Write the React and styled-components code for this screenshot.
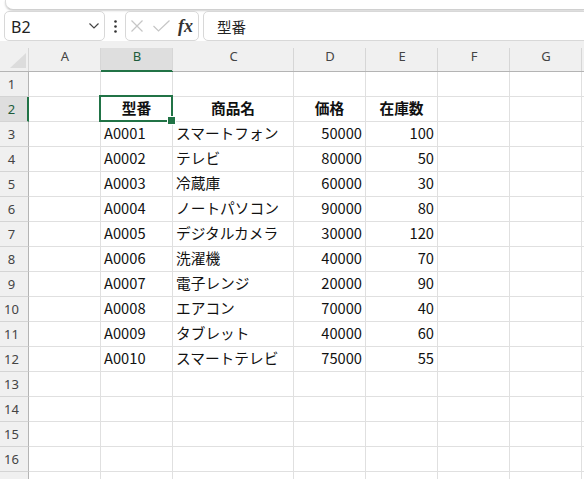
//react
import React from 'react';
//styled
import styled, { createGlobalStyle } from 'styled-components';

const GlobalStyle = createGlobalStyle`
  html, body {
    margin: 0;
    padding: 0;
    background: #fff;
    overflow: hidden;
  }
  * {
    box-sizing: border-box;
  }
`;

const COLS = ['A', 'B', 'C', 'D', 'E', 'F', 'G', ''];
// 16 labelled rows, plus the top sliver of row 17 at the window edge
const ROW_COUNT = 17;
const LABELLED_ROWS = 16;

const items = [
  ['A0001', 'スマートフォン', 50000, 100],
  ['A0002', 'テレビ', 80000, 50],
  ['A0003', '冷蔵庫', 60000, 30],
  ['A0004', 'ノートパソコン', 90000, 80],
  ['A0005', 'デジタルカメラ', 30000, 120],
  ['A0006', '洗濯機', 40000, 70],
  ['A0007', '電子レンジ', 20000, 90],
  ['A0008', 'エアコン', 70000, 40],
  ['A0009', 'タブレット', 40000, 60],
  ['A0010', 'スマートテレビ', 75000, 55],
];

// build cell values for a row number (1-based)
const rowValues = n => {
  if (n === 2) return ['', '型番', '商品名', '価格', '在庫数'];
  const item = items[n - 3];
  if (!item) return [];
  return ['', ...item];
};

const App = () => {
  return (
    <Page>
      <GlobalStyle />
      <RibbonEdge />
      <FormulaBar>
        <NameBox>
          <span>B2</span>
          <svg width='10' height='6' viewBox='0 0 10 6'>
            <polyline points='0.5,0.5 5,5 9.5,0.5' fill='none' stroke='#444' strokeWidth='1.2' />
          </svg>
        </NameBox>
        <Dots>
          <svg width='3' height='13' viewBox='0 0 3 13'>
            <circle cx='1.5' cy='1.5' r='1.3' fill='#333' />
            <circle cx='1.5' cy='6.5' r='1.3' fill='#333' />
            <circle cx='1.5' cy='11.5' r='1.3' fill='#333' />
          </svg>
        </Dots>
        <FxBox>
          <svg width='12' height='12' viewBox='0 0 12 12'>
            <path d='M0.5 0.5 L11.5 11.5 M11.5 0.5 L0.5 11.5' stroke='#c6c6c6' strokeWidth='1.2' />
          </svg>
          <svg width='17' height='12' viewBox='0 0 17 12'>
            <polyline points='0.5,6 5.5,11 16.5,0.5' fill='none' stroke='#c6c6c6' strokeWidth='1.2' />
          </svg>
          <FxLabel>fx</FxLabel>
        </FxBox>
        <FormulaInput>型番</FormulaInput>
      </FormulaBar>

      <Sheet>
        <Corner>
          <svg width='16' height='15' viewBox='0 0 16 15'>
            <polygon points='16,0 16,15 0,15' fill='#dcdcdc' />
          </svg>
        </Corner>
        {COLS.map(c => (
          <ColHeader key={c || 'H'} $selected={c === 'B'}>
            {c}
          </ColHeader>
        ))}
        {Array.from({ length: ROW_COUNT }, (_, i) => {
          const n = i + 1;
          const vals = rowValues(n);
          return (
            <React.Fragment key={n}>
              <RowHeader $selected={n === 2}>{n <= LABELLED_ROWS ? n : ''}</RowHeader>
              {COLS.map((c, ci) => {
                const v = vals[ci];
                const isNum = typeof v === 'number';
                return (
                  <Cell
                    key={c || 'H'}
                    $align={n === 2 ? 'center' : isNum ? 'flex-end' : 'flex-start'}
                    $bold={n === 2}
                    $active={n === 2 && c === 'B'}
                  >
                    {v}
                  </Cell>
                );
              })}
            </React.Fragment>
          );
        })}
      </Sheet>
    </Page>
  );
};

const Page = styled.div`
  width: 584px;
  height: 479px;
  overflow: hidden;
  background: #fff;
`;

const RibbonEdge = styled.div`
  height: 10px;
  margin-left: 5px;
  background: #fff;
  border-left: 1px solid #dcdcdc;
  border-bottom: 1px solid #d0d0d0;
  border-bottom-left-radius: 8px;
  box-shadow: 0 1px 2px rgba(0, 0, 0, 0.18);
`;

const FormulaBar = styled.div`
  display: flex;
  align-items: center;
  height: 30px;
  margin-top: 1px;
  padding-left: 4px;
  font-family: 'Noto Sans', 'Noto Sans CJK JP', sans-serif;
`;

const Box = styled.div`
  height: 30px;
  border: 1px solid #d8d8d8;
  border-radius: 5px;
  background: #fff;
  display: flex;
  align-items: center;
`;

const NameBox = styled(Box)`
  width: 101px;
  padding: 2px 5px 0 6px;
  justify-content: space-between;
  font-size: 16px;
  color: #222;
  svg {
    margin-top: -2px;
  }
`;

const Dots = styled.div`
  width: 20px;
  display: flex;
  justify-content: center;
  align-items: center;
`;

const FxBox = styled(Box)`
  width: 74px;
  padding-left: 5px;
  gap: 10px;
`;

const FxLabel = styled.span`
  font-family: 'Liberation Serif', serif;
  font-style: italic;
  font-weight: bold;
  font-size: 18px;
  color: #333;
  margin-left: -2px;
  line-height: 1;
`;

const FormulaInput = styled(Box)`
  flex: 1;
  margin-left: 4px;
  margin-right: -10px;
  padding-left: 13px;
  font-family: 'Noto Sans CJK JP', sans-serif;
  font-size: 14.5px;
  color: #222;
`;

const Sheet = styled.div`
  display: grid;
  grid-template-columns: 29px 72px 72px 121px 72px 72px 72px 72px 1fr;
  grid-template-rows: 31px repeat(${ROW_COUNT}, 25px);
  margin-right: -20px;
`;

const Corner = styled.div`
  background: #f0f0f0;
  border-bottom: 1px solid #b4b4b4;
  display: flex;
  align-items: flex-end;
  justify-content: flex-end;
  padding: 0 3px 3px 0;
`;

const ColHeader = styled.div`
  position: relative;
  display: flex;
  align-items: center;
  justify-content: center;
  font-family: 'Noto Sans', sans-serif;
  font-size: 13px;
  color: ${p => (p.$selected ? '#1d5c3a' : '#444')};
  background: ${p =>
    p.$selected
      ? 'linear-gradient(to bottom, #f0f0f0 7px, #dedede 7px)'
      : '#f0f0f0'};
  border-bottom: ${p => (p.$selected ? '2px solid #217346' : '1px solid #b4b4b4')};
  padding-top: ${p => (p.$selected ? '1px' : '0')};
  &::before {
    content: '';
    position: absolute;
    left: -1px;
    top: 7px;
    bottom: 0;
    width: 1px;
    background: #d6d6d6;
  }
`;

const RowHeader = styled.div`
  display: flex;
  align-items: center;
  justify-content: center;
  padding-right: ${p => (p.$selected ? '4px' : '5px')};
  font-family: 'Noto Sans', sans-serif;
  font-size: 13px;
  color: ${p => (p.$selected ? '#1d5c3a' : '#444')};
  background: ${p => (p.$selected ? '#dedede' : '#f0f0f0')};
  border-bottom: 1px solid #d4d4d4;
  border-right: ${p => (p.$selected ? '2px solid #217346' : '1px solid #b4b4b4')};
`;

const Cell = styled.div`
  position: relative;
  display: flex;
  align-items: center;
  justify-content: ${p => p.$align};
  padding: 0 3px 1px 3px;
  border-right: 1px solid #e0e0e0;
  border-bottom: 1px solid #e0e0e0;
  font-family: 'Noto Sans CJK JP', sans-serif;
  font-size: 14.7px;
  font-weight: ${p => (p.$bold ? 700 : 400)};
  line-height: 1;
  color: #111;
  white-space: nowrap;
  ${p =>
    p.$active &&
    `
    &::after {
      content: '';
      position: absolute;
      top: -2px;
      left: -2px;
      right: -1px;
      bottom: -1px;
      border: 2px solid #217346;
      z-index: 2;
    }
    &::before {
      content: '';
      position: absolute;
      right: -4px;
      bottom: -4px;
      width: 7px;
      height: 7px;
      background: #217346;
      border: 1px solid #fff;
      z-index: 3;
    }
  `}
`;

export default App;
